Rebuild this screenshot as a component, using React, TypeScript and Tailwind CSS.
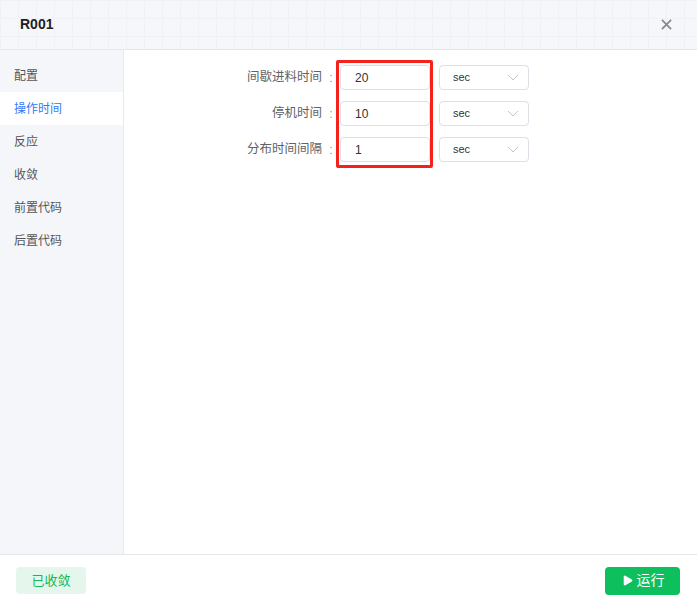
import { Play } from "lucide-react";

const menu = ["配置", "操作时间", "反应", "收敛", "前置代码", "后置代码"];

const rows = [
  { label: "间歇进料时间", value: "20" },
  { label: "停机时间", value: "10" },
  { label: "分布时间间隔", value: "1" },
];

function Chevron() {
  return (
    <svg width="12" height="7" viewBox="0 0 12 7" fill="none" className="text-[#c0c4cc]">
      <path d="M1 1l5 5 5-5" stroke="currentColor" strokeWidth="1" />
    </svg>
  );
}

export default function App() {
  return (
    <div
      className="h-[606px] w-[697px] flex flex-col bg-white overflow-hidden rounded-b-md"
      style={{ fontFamily: '"Liberation Sans", "Noto Sans CJK SC", sans-serif' }}
    >
      {/* header */}
      <div className="h-[50px] shrink-0 flex items-center justify-between px-5 border-b border-[#e4e6ea] bg-[#f6f7fa] bg-[linear-gradient(#f0f1f5_1px,transparent_1px),linear-gradient(90deg,#f0f1f5_1px,transparent_1px)] bg-[size:18px_18px]">
        <span className="text-[14px] font-bold text-[#1f1f1f]">R001</span>
        <svg width="11" height="11" viewBox="0 0 12 12" className="mr-[5px] text-[#8a8a8a]">
          <path d="M1 1l10 10M11 1L1 11" stroke="currentColor" strokeWidth="2" />
        </svg>
      </div>

      <div className="flex flex-1 min-h-0">
        {/* sidebar */}
        <div className="w-[124px] shrink-0 bg-[#f5f6fa] border-r border-[#e8e9ee] pt-[9px]">
          {menu.map((m) => (
            <div
              key={m}
              className={
                "h-[33px] flex items-center pl-[14px] text-[12px] " +
                (m === "操作时间" ? "bg-white text-[#2f7bf5]" : "text-[#555]")
              }
            >
              {m}
            </div>
          ))}
        </div>

        {/* form */}
        <div className="flex-1 pt-[15px]">
          <div className="relative flex flex-col gap-[11px]">
            {rows.map((r) => (
              <div key={r.label} className="flex items-center h-[25px]">
                <span className="w-[198px] text-right text-[12.5px] text-[#606266]">{r.label}</span>
                <span className="w-[18px] text-center text-[12px] text-[#999]">:</span>
                <div className="w-[90px] h-[25px] border border-[#dcdfe6] rounded-[4px] flex items-center pl-[14px] text-[12px] text-[#333]">
                  {r.value}
                </div>
                <div className="ml-[9px] w-[90px] h-[25px] border border-[#dcdfe6] rounded-[4px] flex items-center justify-between pl-[13px] pr-[9px] text-[11px] text-[#333]">
                  <span>sec</span>
                  <Chevron />
                </div>
              </div>
            ))}
            <div className="absolute left-[212px] top-[-5px] w-[97px] h-[108px] border-[3px] border-[#f5221b] rounded-[2px] pointer-events-none" />
          </div>
        </div>
      </div>

      {/* footer */}
      <div className="h-[52px] shrink-0 border-t border-[#e4e6ea] flex items-center justify-between pl-4 pr-[17px]">
        <button className="w-[70px] h-[27px] rounded-[4px] bg-[#e5f7ec] text-[#12b955] text-[13px]">
          已收敛
        </button>
        <button className="w-[75px] h-[28px] rounded-[4px] bg-[#0ebf5e] text-white text-[14px] flex items-center justify-center gap-[3px]">
          <Play size={13} fill="currentColor" strokeWidth={0} />
          运行
        </button>
      </div>
    </div>
  );
}
